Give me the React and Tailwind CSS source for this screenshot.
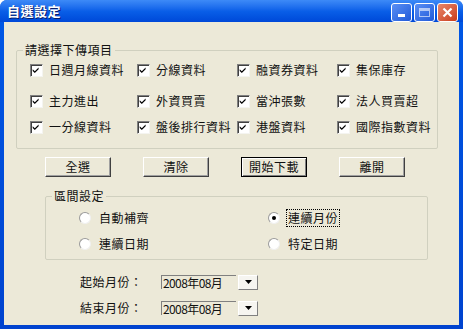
import React from "react";

const F = "font-['Noto_Sans_CJK_TC','Noto_Sans_CJK_SC',sans-serif]";

function Check({ label }) {
  return (
    <div className="flex items-center gap-[6px] h-[16px]">
      <div className="relative w-[13px] h-[13px] bg-white border border-t-[#808080] border-l-[#808080] border-b-[#f4f4f0] border-r-[#f4f4f0] shadow-[inset_1px_1px_0_#404040]">
        <svg viewBox="0 0 13 13" className="absolute inset-0 w-[11px] h-[11px]">
          <path d="M2 5 L4.5 7.5 L9 3 L9 5 L4.5 9.5 L2 7 Z" fill="#000" />
        </svg>
      </div>
      <span className="text-[12px] leading-[16px] tracking-[0.5px] text-[#111]">{label}</span>
    </div>
  );
}

function Radio({ label, checked, focus }) {
  return (
    <div className="flex items-center gap-[7px] h-[16px]">
      <div className="relative w-[12px] h-[12px] rounded-full bg-white border border-t-[#9a9a9a] border-l-[#9a9a9a] border-b-[#f0f0f0] border-r-[#f0f0f0] flex items-center justify-center">
        {checked && <div className="w-[4px] h-[4px] rounded-full bg-black" />}
      </div>
      <span
        className={
          "text-[12px] leading-[16px] tracking-[0.5px] text-[#111] px-[1px] " +
          (focus ? "outline outline-1 outline-dotted outline-black" : "")
        }
      >
        {label}
      </span>
    </div>
  );
}

function Btn({ children, def }) {
  return (
    <div
      className={
        "w-[66px] h-[20px] flex items-center justify-center text-[12px] tracking-[0.5px] text-[#111] bg-[#ece9d8] " +
        (def
          ? "border border-black shadow-[inset_1px_1px_0_#fff,inset_-1px_-1px_0_#808080]"
          : "border border-t-white border-l-white border-b-[#404040] border-r-[#404040] shadow-[inset_-1px_-1px_0_#a0a0a0]")
      }
    >
      {children}
    </div>
  );
}

function DateRow({ label }) {
  return (
    <div className="flex items-center h-[16px]">
      <span className="w-[81px] text-[12px] tracking-[0.5px] text-[#111]">{label}</span>
      <div className="w-[75px] h-[14px] flex items-center border-l border-t border-[#808080] pl-[1px]">
        <span className="text-[12px] leading-[14px] tracking-[-0.6px] text-[#111]">2008年08月</span>
      </div>
      <div className="ml-[2px] w-[20px] h-[15px] bg-[#f6f5f0] border border-t-white border-l-white border-b-[#808080] border-r-[#808080] flex items-center justify-center">
        <svg width="7" height="4" viewBox="0 0 7 4">
          <path d="M0 0 H7 L3.5 4 Z" fill="#000" />
        </svg>
      </div>
    </div>
  );
}

export default function App() {
  return (
    <div className={"w-[463px] h-[329px] flex flex-col bg-gradient-to-b from-[#0058e6] to-[#0043cf] rounded-t-[7px] " + F}>
      <div className="h-[22px] flex items-center pl-[7px] pr-[5px] bg-gradient-to-b from-[#3d8af7] via-[#0a5fe8] to-[#0048d8] rounded-t-[7px]">
        <span className="text-[13px] font-bold text-white [text-shadow:1px_1px_0_#0a1e6a] tracking-[0.5px]">
          自選設定
        </span>
        <div className="ml-auto flex gap-[2px] mt-[2px]">
          <div className="w-[21px] h-[19px] rounded-[3px] border border-white bg-gradient-to-br from-[#5a8ff5] to-[#2059d8] flex items-end justify-center pb-[4px]">
            <div className="w-[7px] h-[3px] bg-white" />
          </div>
          <div className="w-[21px] h-[19px] rounded-[3px] border border-white bg-gradient-to-br from-[#5a8ff5] to-[#2059d8] flex items-center justify-center">
            <div className="w-[11px] h-[9px] border border-white border-t-[3px] opacity-60" />
          </div>
          <div className="w-[21px] h-[19px] rounded-[3px] border border-white bg-gradient-to-br from-[#e8866a] to-[#c83a16] flex items-center justify-center">
            <svg width="11" height="11" viewBox="0 0 11 11">
              <path d="M1.5 1.5 L9.5 9.5 M9.5 1.5 L1.5 9.5" stroke="#fff" strokeWidth="2.2" />
            </svg>
          </div>
        </div>
      </div>

      <div className="flex-1 mx-[4px] mb-[4px] bg-[#ece9d8] flex flex-col">
        <fieldset className="mt-[20px] ml-[12px] mr-[21px] h-[107px] border border-[#d0d0bf] rounded-[2px] px-0 pb-0">
          <legend className="ml-[6px] px-[2px] text-[12px] leading-[16px] tracking-[0.5px] text-[#111]">請選擇下傳項目</legend>
          <div className="pl-[13px] pt-[4px] flex flex-col">
            <div className="grid grid-cols-[107px_100px_100px_1fr]">
              <Check label="日週月線資料" />
              <Check label="分線資料" />
              <Check label="融資券資料" />
              <Check label="集保庫存" />
            </div>
            <div className="grid grid-cols-[107px_100px_100px_1fr] mt-[15px]">
              <Check label="主力進出" />
              <Check label="外資買賣" />
              <Check label="當沖張數" />
              <Check label="法人買賣超" />
            </div>
            <div className="grid grid-cols-[107px_100px_100px_1fr] mt-[10px]">
              <Check label="一分線資料" />
              <Check label="盤後排行資料" />
              <Check label="港盤資料" />
              <Check label="國際指數資料" />
            </div>
          </div>
        </fieldset>

        <div className="mt-[8px] ml-[41px] flex gap-[32px]">
          <Btn>全選</Btn>
          <Btn>清除</Btn>
          <Btn def>開始下載</Btn>
          <Btn>離開</Btn>
        </div>

        <fieldset className="mt-[11px] ml-[41px] w-[383px] h-[72px] border border-[#d0d0bf] rounded-[2px] px-0 pb-0">
          <legend className="ml-[6px] px-[2px] text-[12px] leading-[16px] tracking-[0.5px] text-[#111]">區間設定</legend>
          <div className="pl-[33px] pt-[6px] grid grid-cols-[189px_1fr] gap-y-[10px]">
            <Radio label="自動補齊" />
            <Radio label="連續月份" checked focus />
            <Radio label="連續日期" />
            <Radio label="特定日期" />
          </div>
        </fieldset>

        <div className="mt-[14px] ml-[76px] flex flex-col gap-[10px]">
          <DateRow label="起始月份：" />
          <DateRow label="結束月份：" />
        </div>
      </div>
    </div>
  );
}
